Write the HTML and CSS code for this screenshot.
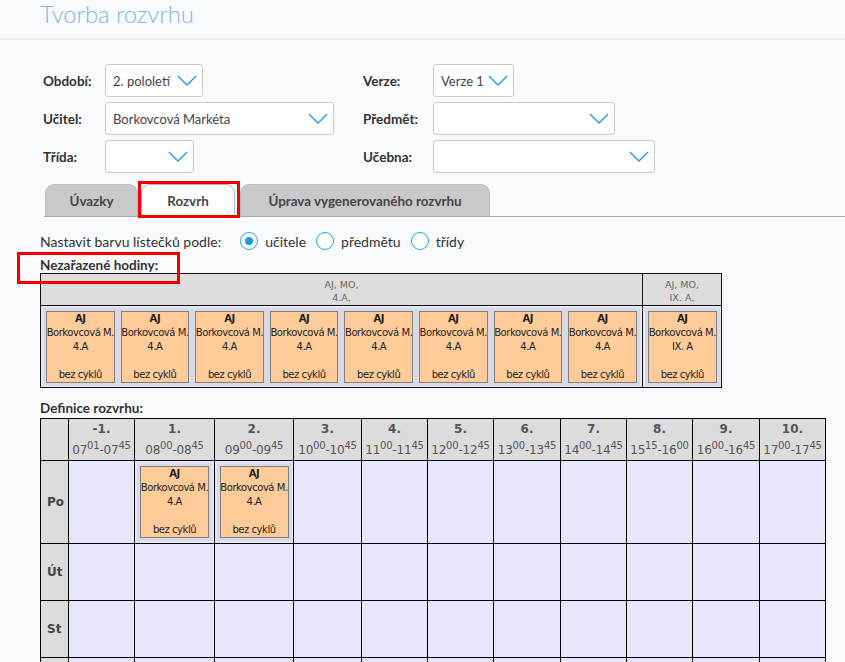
FILE: index.html
```html
<!DOCTYPE html>
<html lang="cs">
<head>
<meta charset="utf-8">
<title>Tvorba rozvrhu</title>
<link rel="stylesheet" href="styles.css">
</head>
<body>
<header class="page-head">
  <h1 class="title">Tvorba rozvrhu</h1>
</header>
<div class="page">
  <div class="filters">
    <span class="flabel">Období:</span>
    <div class="sel sel-obdobi"><span class="sel-text">2. pololetí</span><svg class="chev" viewBox="0 0 22 12"><polyline points="1,1 11,11 21,1"/></svg></div>
    <span class="flabel">Verze:</span>
    <div class="sel sel-verze"><span class="sel-text">Verze 1</span><svg class="chev" viewBox="0 0 22 12"><polyline points="1,1 11,11 21,1"/></svg></div>

    <span class="flabel">Učitel:</span>
    <div class="sel sel-ucitel"><span class="sel-text">Borkovcová Markéta</span><svg class="chev" viewBox="0 0 22 12"><polyline points="1,1 11,11 21,1"/></svg></div>
    <span class="flabel">Předmět:</span>
    <div class="sel sel-predmet"><span class="sel-text"></span><svg class="chev" viewBox="0 0 22 12"><polyline points="1,1 11,11 21,1"/></svg></div>

    <span class="flabel">Třída:</span>
    <div class="sel sel-trida"><span class="sel-text"></span><svg class="chev" viewBox="0 0 22 12"><polyline points="1,1 11,11 21,1"/></svg></div>
    <span class="flabel">Učebna:</span>
    <div class="sel sel-ucebna"><span class="sel-text"></span><svg class="chev" viewBox="0 0 22 12"><polyline points="1,1 11,11 21,1"/></svg></div>
  </div>

  <div class="tabs">
    <div class="tab tab-uvazky">Úvazky</div>
    <div class="tab tab-rozvrh active marked">Rozvrh</div>
    <div class="tab tab-uprava">Úprava vygenerovaného rozvrhu</div>
  </div>

  <div class="color-row">
    <span class="color-label">Nastavit barvu lístečků podle:</span>
    <span class="radio checked"></span><span class="radio-text">učitele</span>
    <span class="radio"></span><span class="radio-text">předmětu</span>
    <span class="radio"></span><span class="radio-text">třídy</span>
  </div>

  <div class="section-label marked-label">Nezařazené hodiny:</div>
  <table class="unassigned">
    <colgroup><col class="ua-col1"><col class="ua-col2"></colgroup>
    <tr class="ua-head">
      <td>AJ, MO,<br>4.A,</td>
      <td>AJ, MO,<br>IX. A,</td>
    </tr>
    <tr class="ua-body">
      <td>
        <div class="card-list">
          <div class="card-wrap"><div class="card"><b>AJ</b><span>Borkovcová M.</span><span>4.A</span><span></span><span>bez cyklů</span></div></div>
          <div class="card-wrap"><div class="card"><b>AJ</b><span>Borkovcová M.</span><span>4.A</span><span></span><span>bez cyklů</span></div></div>
          <div class="card-wrap"><div class="card"><b>AJ</b><span>Borkovcová M.</span><span>4.A</span><span></span><span>bez cyklů</span></div></div>
          <div class="card-wrap"><div class="card"><b>AJ</b><span>Borkovcová M.</span><span>4.A</span><span></span><span>bez cyklů</span></div></div>
          <div class="card-wrap"><div class="card"><b>AJ</b><span>Borkovcová M.</span><span>4.A</span><span></span><span>bez cyklů</span></div></div>
          <div class="card-wrap"><div class="card"><b>AJ</b><span>Borkovcová M.</span><span>4.A</span><span></span><span>bez cyklů</span></div></div>
          <div class="card-wrap"><div class="card"><b>AJ</b><span>Borkovcová M.</span><span>4.A</span><span></span><span>bez cyklů</span></div></div>
          <div class="card-wrap"><div class="card"><b>AJ</b><span>Borkovcová M.</span><span>4.A</span><span></span><span>bez cyklů</span></div></div>
        </div>
      </td>
      <td>
        <div class="card-list">
          <div class="card-wrap"><div class="card"><b>AJ</b><span>Borkovcová M.</span><span>IX. A</span><span></span><span>bez cyklů</span></div></div>
        </div>
      </td>
    </tr>
  </table>

  <div class="section-label def-label">Definice rozvrhu:</div>
  <table class="grid">
    <colgroup>
      <col class="c-day"><col class="c66"><col class="c80"><col class="c79"><col class="c68"><col class="c66"><col class="c66"><col class="c67"><col class="c66"><col class="c66"><col class="c67"><col class="c66">
    </colgroup>
    <tr class="g-head">
      <th class="corner"></th>
      <th><b>-1.</b><span class="time">07<sup>01</sup>-07<sup>45</sup></span></th>
      <th><b>1.</b><span class="time">08<sup>00</sup>-08<sup>45</sup></span></th>
      <th><b>2.</b><span class="time">09<sup>00</sup>-09<sup>45</sup></span></th>
      <th><b>3.</b><span class="time">10<sup>00</sup>-10<sup>45</sup></span></th>
      <th><b>4.</b><span class="time">11<sup>00</sup>-11<sup>45</sup></span></th>
      <th><b>5.</b><span class="time">12<sup>00</sup>-12<sup>45</sup></span></th>
      <th><b>6.</b><span class="time">13<sup>00</sup>-13<sup>45</sup></span></th>
      <th><b>7.</b><span class="time">14<sup>00</sup>-14<sup>45</sup></span></th>
      <th><b>8.</b><span class="time">15<sup>15</sup>-16<sup>00</sup></span></th>
      <th><b>9.</b><span class="time">16<sup>00</sup>-16<sup>45</sup></span></th>
      <th><b>10.</b><span class="time">17<sup>00</sup>-17<sup>45</sup></span></th>
    </tr>
    <tr class="row-tall">
      <th class="day">Po</th>
      <td></td>
      <td><div class="card-wrap"><div class="card"><b>AJ</b><span>Borkovcová M.</span><span>4.A</span><span></span><span>bez cyklů</span></div></div></td>
      <td><div class="card-wrap"><div class="card"><b>AJ</b><span>Borkovcová M.</span><span>4.A</span><span></span><span>bez cyklů</span></div></div></td>
      <td></td><td></td><td></td><td></td><td></td><td></td><td></td><td></td>
    </tr>
    <tr class="row">
      <th class="day">Út</th>
      <td></td><td></td><td></td><td></td><td></td><td></td><td></td><td></td><td></td><td></td><td></td>
    </tr>
    <tr class="row">
      <th class="day">St</th>
      <td></td><td></td><td></td><td></td><td></td><td></td><td></td><td></td><td></td><td></td><td></td>
    </tr>
    <tr class="row">
      <th class="day"></th>
      <td></td><td></td><td></td><td></td><td></td><td></td><td></td><td></td><td></td><td></td><td></td>
    </tr>
  </table>
</div>
</body>
</html>
```

FILE: styles.css
```css
* { box-sizing: border-box; }

body {
  margin: 0;
  background: #f8fafc;
  font-family: Lato, "Open Sans", "Noto Sans", sans-serif;
  color: #333;
}

.page-head {
  height: 40px;
  border-bottom: 2px solid #e6eaee;
  padding-left: 40px;
}

.title {
  margin: 0;
  font-weight: 300;
  font-size: 24px;
  line-height: 27px;
  color: #86b5dd;
  letter-spacing: -0.1px;
}

.page {
  padding-left: 40px;
}

/* filters */
.filters {
  display: grid;
  grid-template-columns: 62px 258px 70px 1fr;
  grid-auto-rows: 33px;
  row-gap: 5px;
  align-items: center;
  margin-top: 24px;
  padding-left: 3px;
}

.flabel {
  font-weight: 700;
  font-size: 13.5px;
  color: #333;
}

.sel {
  height: 33px;
  border: 1px solid #cbcbcb;
  border-radius: 3px;
  background: #fff;
  display: flex;
  align-items: center;
  justify-content: space-between;
  gap: 2px;
  padding: 0 5px 0 7px;
  font-size: 13px;
  color: #444;
  white-space: nowrap;
}

.chev {
  width: 20px;
  height: 11px;
  flex: none;
}
.chev polyline {
  fill: none;
  stroke: #1c9de3;
  stroke-width: 1.4;
}

.sel-obdobi { width: 98px; }
.sel-verze { width: 81px; }
.sel-ucitel { width: 229px; }
.sel-predmet { width: 182px; }
.sel-trida { width: 89px; }
.sel-ucebna { width: 222px; }

/* tabs */
.tabs {
  display: flex;
  gap: 3px;
  margin-top: 11px;
  margin-left: 4px;
  padding-left: 1px;
  border-bottom: 1px solid #a9a9a9;
  height: 33px;
  align-items: flex-end;
}

.tab {
  height: 32px;
  border: 1px solid #bcbcbc;
  border-bottom: none;
  border-radius: 9px 9px 0 0;
  background: #c9c9c9;
  font-weight: 700;
  font-size: 13.4px;
  color: #454545;
  display: flex;
  align-items: center;
  justify-content: center;
  position: relative;
}

.tab-uvazky { width: 93px; }
.tab-rozvrh { width: 94px; }
.tab-uprava { width: 250px; margin-left: 2px; }

.tab.active {
  background: #fff;
  border-color: #b7b7b7;
}

.marked::after {
  content: "";
  position: absolute;
  left: -4px;
  right: -6px;
  top: -4px;
  bottom: -2px;
  border: 3px solid #f20000;
}

/* radio row */
.color-row {
  display: flex;
  align-items: center;
  height: 20px;
  margin-top: 14px;
  font-size: 14px;
  color: #333;
}

.color-label { margin-right: 19px; }

.radio {
  width: 18px;
  height: 18px;
  border: 1.5px solid #2aa2e4;
  border-radius: 50%;
  background: #fff;
  display: flex;
  align-items: center;
  justify-content: center;
  margin-right: 7px;
}
.radio.checked::after {
  content: "";
  width: 8px;
  height: 8px;
  border-radius: 50%;
  background: #1d9be2;
}
.radio-text { margin-right: 10px; }

/* section labels */
.section-label {
  font-weight: 700;
  font-size: 13.5px;
  color: #333;
  line-height: 16px;
}

.marked-label {
  position: relative;
  margin-top: 6px;
  width: 135px;
}
.marked-label::after {
  content: "";
  position: absolute;
  left: -23px;
  top: -5px;
  width: 157px;
  height: 26px;
  border: 3px solid #f20000;
}

.def-label {
  margin-top: 12px;
  margin-bottom: 2px;
}

/* cards */
.card-wrap {
  display: inline-block;
  padding: 3px;
  background: #d9d9e6;
  vertical-align: middle;
  min-width: 0;
}

.card {
  width: 69px;
  height: 72px;
  border: 1px solid #808080;
  background: #ffcc99;
  display: flex;
  flex-direction: column;
  align-items: center;
  font-family: "DejaVu Sans", Verdana, sans-serif;
  font-size: 10px;
  letter-spacing: -0.45px;
  line-height: 14px;
  color: #1e1e1e;
  white-space: nowrap;
}
.card > * { height: 14px; }

/* unassigned table */
.unassigned {
  border-collapse: collapse;
  width: 681px;
  table-layout: fixed;
  border: 1px solid #111;
}
.ua-col1 { width: 602px; }
.ua-col2 { width: 79px; }

.unassigned td {
  border: 1px solid #111;
  padding: 0;
}

.ua-head td {
  background: #dddddd;
  height: 32px;
  text-align: center;
  font-family: "DejaVu Sans", Verdana, sans-serif;
  font-size: 9.5px;
  line-height: 13px;
  color: #666;
  vertical-align: middle;
  padding-top: 2px;
}

.ua-body td {
  background: #e6e6f4;
  padding: 2px 1px 1px 2px;
  vertical-align: top;
}

.card-list {
  display: flex;
}
.card-list .card-wrap {
  flex: 0 0 74.6px;
}
.card-list .card { width: 100%; }

/* main grid */
.grid {
  border-collapse: collapse;
  table-layout: fixed;
  width: 785px;
  border: 1px solid #000;
}
.c-day { width: 28px; }
.c66 { width: 66px; }
.c67 { width: 67px; }
.c68 { width: 68px; }
.c79 { width: 79px; }
.c80 { width: 80px; }

.grid th, .grid td {
  border: 1px solid #000;
  padding: 0;
}

.g-head th {
  height: 41px;
  background: #dcdcdc;
  font-family: "DejaVu Sans", Verdana, sans-serif;
  font-weight: 400;
  color: #555;
  text-align: center;
  vertical-align: top;
  padding-top: 3px;
}
.g-head b {
  display: block;
  font-size: 12px;
  line-height: 14px;
  font-weight: 700;
}
.time {
  display: block;
  font-size: 12px;
  line-height: 20px;
  padding-top: 4px;
  letter-spacing: -0.2px;
}
.time sup {
  font-size: 10px;
  line-height: 0;
  vertical-align: 5px;
}

.grid .day {
  background: #dcdcdc;
  font-family: "DejaVu Sans", Verdana, sans-serif;
  font-size: 12px;
  font-weight: 700;
  color: #444;
  text-align: left;
  padding-left: 6px;
}

.grid td {
  background: #e6e6fa;
  text-align: center;
  vertical-align: middle;
}

.row-tall { height: 83px; }
.row { height: 57px; }
```
